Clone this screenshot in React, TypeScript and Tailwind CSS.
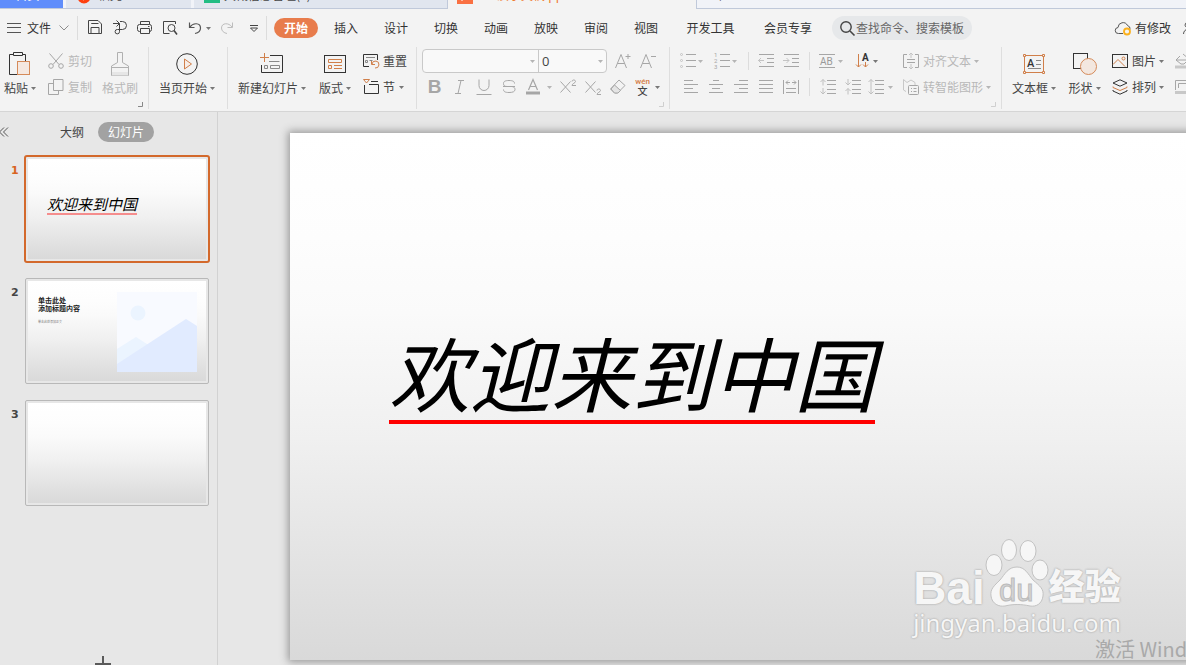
import type { ReactNode } from "react"

type IconProps = { w?: number; h?: number; className?: string; children: ReactNode }

// Base wrapper, every icon is drawn 1:1 in pixels
function Icon({ w = 16, h = 16, className = "text-[#a6a6a6]", children }: IconProps) {
  return (
    <svg
      width={w}
      height={h}
      viewBox={`0 0 ${w} ${h}`}
      fill="none"
      stroke="currentColor"
      className={`block shrink-0 overflow-visible ${className}`}
      aria-hidden="true"
    >
      {children}
    </svg>
  )
}

function Caret({ className = "text-[#777]" }: { className?: string }) {
  return (
    <Icon w={5} h={3} className={className}>
      <path d="M0 0h5L2.5 3z" fill="currentColor" stroke="none" />
    </Icon>
  )
}

function Divider() {
  return <div className="h-[62px] w-px shrink-0 bg-[#dedede]" />
}

function SmallDivider({ className }: { className: string }) {
  return <div className={`h-[18px] w-px shrink-0 bg-[#dcdcdc] ${className}`} />
}

function Corner({ className = "text-[#cfcfcf]" }: { className?: string }) {
  return (
    <button aria-label="更多" className="absolute right-[5px] bottom-1">
      <Icon w={5} h={5} className={className}>
        <path d="M4.5 0v4.5H0" />
      </Icon>
    </button>
  )
}

type BigButtonProps = { icon: ReactNode; label: string; caret?: boolean; className: string }

function BigButton({ icon, label, caret = true, className }: BigButtonProps) {
  return (
    <button className={`flex shrink-0 flex-col items-center pt-1 whitespace-nowrap ${className}`}>
      <span className="flex h-6 items-center">{icon}</span>
      <span className="flex h-6 items-center gap-[3px]">
        {label}
        {caret && <Caret />}
      </span>
    </button>
  )
}

type RowButtonProps = { icon: ReactNode; label: string; caret?: string; className?: string }

function RowButton({ icon, label, caret, className = "" }: RowButtonProps) {
  return (
    <button className={`flex h-[26px] items-center gap-1 whitespace-nowrap ${className}`}>
      {icon}
      <span className="flex items-center gap-[3px]">
        {label}
        {caret && <Caret className={caret} />}
      </span>
    </button>
  )
}

function IconButton({ label, className = "", children }: { label: string; className?: string; children: ReactNode }) {
  return (
    <button aria-label={label} className={`flex h-[26px] shrink-0 items-center justify-center ${className}`}>
      {children}
    </button>
  )
}

const menuTabs = ["插入", "设计", "切换", "动画", "放映", "审阅", "视图"]

const alignIcons = [
  { label: "左对齐", d: "M1 1.5h9M1 5.5h14M1 9.5h9M1 13.5h14" },
  { label: "居中", d: "M5 1.5h6M1 5.5h14M4 9.5h8M1 13.5h14" },
  { label: "右对齐", d: "M6 1.5h9M1 5.5h14M6 9.5h9M1 13.5h14" },
  { label: "两端对齐", d: "M1 1.5h14M1 5.5h14M1 9.5h14M1 13.5h14" },
  { label: "分散对齐", d: "M.5 1v14M15.5 1v14M3 9.5h10M3 13.5h10M3 3.5h4M9 3.5h4M5 1.5l-2 2 2 2M11 1.5l2 2-2 2" },
]

function WindowTabs() {
  return (
    <div className="flex h-[9px] shrink-0 items-stretch overflow-hidden bg-[#f1f3f8] text-[12px] leading-[14px] text-[#444]">
      <div className="flex w-[63px] items-end justify-center border-b border-[#c0c9da] bg-[#5f8dfb] pb-[6px] pr-2 text-white">首页</div>
      <div className="w-[3px] border-b border-[#c0c9da]" />
      <div className="flex w-[125px] items-end gap-[6px] border-b border-[#c0c9da] bg-[#e1e6ef] pb-[6px] pl-3">
        <Icon w={14} h={12} className="text-[#fe4010]">
          <circle cx="6" cy="7" r="6.500" fill="currentColor" stroke="none" />
          <path d="M5 10V5h1a2 2 0 0 1 1 4z" stroke="#fff" />
        </Icon>
        稻壳
      </div>
      <div className="w-[3px] border-b border-[#c0c9da]" />
      <div className="flex w-[254px] items-end gap-1 border-r border-b border-[#c0c9da] bg-[#e1e6ef] pb-[6px] pl-[10px]">
        <Icon w={16} h={14} className="text-[#22bd84]">
          <rect width="16" height="15" fill="currentColor" stroke="none" />
        </Icon>
        大概信息管理(1)
      </div>
      <div className="flex w-[248px] items-end gap-2 bg-[#f3f3f3] pb-[7px] pl-[9px] text-[#f07a32]">
        <Icon w={16} h={14} className="text-[#fa7042]">
          <rect width="16" height="16" fill="currentColor" stroke="none" />
          <path d="M5 5v8" stroke="#fff" />
        </Icon>
        <span className="pl-4">演示文稿.pp</span>
      </div>
      <div className="flex flex-1 items-end border-b border-l border-[#c0c9da] pb-1 pl-[20px]">+</div>
    </div>
  )
}

function MenuBar() {
  return (
    <div className="flex h-[38px] shrink-0 items-center overflow-hidden whitespace-nowrap text-[#333]">
      <button className="flex items-center pl-[7px]">
        <Icon w={14} h={10} className="text-[#555]">
          <path d="M0 .5h14M0 4.5h14M0 9.5h14" />
        </Icon>
        <span className="ml-[6px]">文件</span>
        <Icon w={10} h={6} className="ml-2 text-[#8c8c8c]">
          <path d="M.5.5 5 5 9.500.5" />
        </Icon>
      </button>
      <div className="ml-2 h-6 w-px shrink-0 bg-[#dcdcdc]" />
      <div className="ml-[9px] flex shrink-0 items-center gap-[9px]">
        <IconButton label="保存">
          <Icon className="text-[#444]">
            <path d="M1.500.5H11l3.500 3.500v9.500h-13zM4.500 4V3.500h7M4 13.500v-6h8v6" />
          </Icon>
        </IconButton>
        <IconButton label="输出">
          <Icon className="text-[#444]">
            <path d="M1 3.500h6M4.500.500l3 3-3 3M8 1.500h2.500a3.800 3.800 0 0 1 0 8H5.500a2.200 2.200 0 1 0 2 2.200V3.500" />
          </Icon>
        </IconButton>
        <IconButton label="打印">
          <Icon className="text-[#444]">
            <path d="M3.500 4.500v-3h9v3M3.500 11.500h-1a2 2 0 0 1-2-2v-3a2 2 0 0 1 2-2h10a2 2 0 0 1 2 2v3a2 2 0 0 1-2 2M3.500 8.500h9v5h-9zM11 6.500h1.500" />
          </Icon>
        </IconButton>
        <IconButton label="打印预览">
          <Icon className="text-[#444]">
            <path d="M13.500 4v-2.500h-12v12h6" />
            <circle cx="9.500" cy="8" r="3.500" />
            <path d="M12 10.500l3 4" strokeWidth="1.500" />
          </Icon>
        </IconButton>
      </div>
      <IconButton label="撤销" className="ml-[10px]">
        <Icon w={14} h={14} className="text-[#555]">
          <path d="M1.500 1.500v5h5M2 6c3-4.500 10.500-4.500 10.500 1 0 3-2.500 5-5.500 5.500" strokeWidth="1.200" />
        </Icon>
        <span className="pl-1">
          <Caret />
        </span>
      </IconButton>
      <IconButton label="恢复" className="ml-[9px]">
        <Icon w={14} h={14} className="text-[#bdbdbd]">
          <path d="M12.500 1.500v5h-5M12 6c-3-4.500-10.500-4.500-10.500 1 0 3 2.500 5 5.500 5.500" />
        </Icon>
      </IconButton>
      <IconButton label="自定义" className="ml-[16px]">
        <Icon w={8} h={7} className="text-[#444]">
          <path d="M0 .5h8M.500 3h7L4 6.500z" />
        </Icon>
      </IconButton>
      <div className="ml-[8px] h-6 w-px shrink-0 bg-[#dcdcdc]" />
      <button className="ml-[7px] h-5 w-11 shrink-0 rounded-full bg-[#e87c4c] font-bold leading-5 text-white">开始</button>
      <nav className="ml-[3px] flex shrink-0">
        {menuTabs.map((tab) => (
          <button key={tab} className="w-[50px]">
            {tab}
          </button>
        ))}
        <button className="w-[79px]">开发工具</button>
        <button className="w-[76px]">会员专享</button>
      </nav>
      <label className="ml-[6px] flex h-6 w-[140px] shrink-0 items-center gap-px rounded-full bg-[#e6e8ea] pl-2">
        <Icon w={15} h={15} className="text-[#444]">
          <circle cx="6" cy="6" r="5.200" strokeWidth="1.400" />
          <path d="M10 10l4.500 4.500" strokeWidth="1.600" />
        </Icon>
        <input
          aria-label="查找命令、搜索模板"
          placeholder="查找命令、搜索模板"
          className="w-[112px] bg-transparent text-[12px] outline-none placeholder:text-[#666]"
        />
      </label>
      <button className="ml-auto flex shrink-0 items-center gap-[3px]">
        <Icon w={17} h={15} className="text-[#555]">
          <path d="M8 12.500H3.500a3 3 0 0 1-.500-6 5 5 0 0 1 9.500-2 3.500 3.500 0 0 1 2.500 4" />
          <circle cx="12" cy="10.500" r="3" stroke="#fbb01c" strokeWidth="1.800" />
        </Icon>
        有修改
      </button>
      <IconButton label="协作" className="ml-3 w-[3px] overflow-hidden">
        <Icon w={3} h={14} className="text-[#555]">
          <path d="M6 1a3 3 0 0 0-3 5M.500 13a5 5 0 0 1 5-5" />
        </Icon>
      </IconButton>
    </div>
  )
}

function FontGroup() {
  return (
    <div className="relative flex shrink-0 flex-col pr-[9px] pl-[5px] text-[#a6a6a6]">
      <div className="flex h-[26px] items-center">
        <div className="flex h-6 w-[185px] items-center rounded border border-[#c9c9c9] bg-[#f9f9f9] text-[#444]">
          <input aria-label="字体" className="h-full w-[107px] bg-transparent px-1 outline-none" />
          <Caret className="text-[#b5b5b5]" />
          <div className="ml-[3px] h-full w-px bg-[#c9c9c9]" />
          <input
            aria-label="字号"
            defaultValue="0"
            className="h-full w-[59px] bg-transparent pl-[3px] font-['Open_Sans',sans-serif] text-[13px] outline-none"
          />
          <Caret className="text-[#b5b5b5]" />
        </div>
        <IconButton label="增大字号" className="ml-[3px] w-[25px]">
          <Icon>
            <path d="M.5 15 6 1.500 11.500 15M2.500 10.500h7M10.500 3.500h5M13 1v5" />
          </Icon>
        </IconButton>
        <IconButton label="减小字号" className="w-[25px]">
          <Icon>
            <path d="M.5 15 6 1.500 11.500 15M2.500 10.500h7M11 3.500h5" />
          </Icon>
        </IconButton>
      </div>
      <div className="flex h-[26px] items-center font-['Lato',sans-serif] text-[19px] leading-[26px]">
        <IconButton label="加粗" className="w-[25px] font-['Liberation_Sans',sans-serif] font-bold">B</IconButton>
        <IconButton label="倾斜" className="w-[25px]">
          <Icon w={9}>
            <path d="M3 1.500h6M0 14.500h6M6 1.500l-3 13" />
          </Icon>
        </IconButton>
        <IconButton label="下划线" className="w-[24px]">
          <Icon>
            <path d="M3 .5v6a5 5 0 0 0 10 0v-6M.500 15.500h15" />
          </Icon>
        </IconButton>
        <IconButton label="删除线" className="w-[26px]">
          <Icon w={14}>
            <path d="M12.500 4.500c0-2-1.500-3-5.500-3s-5.500 1-5.500 3 1 3 3.500 3h5c2 .300 3 1.500 3 3 0 2-2 3-6 3s-5.500-1-5.500-3M1 7.500h12" />
          </Icon>
        </IconButton>
        <IconButton label="字体颜色" className="w-[22px]">
          <Icon w={14} h={16}>
            <path d="M2.500 11 7 .5 11.500 11M4 7.500h6" strokeWidth="1.200" />
            <path d="M0 14h14" strokeWidth="3" />
          </Icon>
        </IconButton>
        <IconButton label="选择字体颜色" className="w-[11px]">
          <Caret className="text-[#b5b5b5]" />
        </IconButton>
        <IconButton label="上标" className="w-[25px]">
          <Icon>
            <path d="M.5 2.500l10 11M10.500 2.500l-10 11M12 2.500c0-2 3.500-2 3.500 0 0 1.500-3.500 2-3.500 4h4" />
          </Icon>
        </IconButton>
        <IconButton label="下标" className="w-[25px]">
          <Icon>
            <path d="M.5 2.500l10 11M10.500 2.500l-10 11M12 11.500c0-2 3.500-2 3.500 0 0 1.500-3.500 2-3.500 4h4" />
          </Icon>
        </IconButton>
        <IconButton label="清除格式" className="w-[25px]">
          <Icon>
            <path d="M9 1l6 5.500L7.500 14h-3L.500 10z" />
            <path d="M4.500 6l6 5.500L8 14H4.500L1 10z" fill="#e4e4e4" />
          </Icon>
        </IconButton>
        <IconButton label="拼音指南" className="w-[25px]">
          <span className="flex flex-col items-center">
            <span className="font-['Roboto',sans-serif] text-[8px] leading-[8px] font-medium text-[#d47b45]">wén</span>
            <span className="font-['Noto_Sans_CJK_SC',sans-serif] text-[10px] leading-[10px] font-medium text-[#444]">文</span>
          </span>
        </IconButton>
        <Caret />
      </div>
      <Corner />
    </div>
  )
}

function ParagraphGroup() {
  return (
    <div className="relative flex shrink-0 pr-[10px] pl-[10px] text-[#b8b8b8]">
      <div className="flex w-[213px] flex-col">
        <div className="flex h-[26px] items-center">
          <IconButton label="项目符号" className="gap-[2px]">
            <Icon>
              <path d="M6 1.500h10M6 7.500h10M6 13.500h10" />
              <g stroke="#c4c4c4">
                <circle cx="1.500" cy="1.500" r="1" />
                <circle cx="1.500" cy="7.500" r="1" />
                <circle cx="1.500" cy="13.500" r="1" />
              </g>
            </Icon>
            <Caret className="text-[#b5b5b5]" />
          </IconButton>
          <IconButton label="编号" className="ml-[11px] gap-[2px]">
            <Icon>
              <path d="M6 1.500h10M6 7.500h10M6 13.500h10" />
              <g fill="currentColor" stroke="none" fontSize="6" fontFamily="Roboto, sans-serif">
                <text x="0" y="4">1</text>
                <text x="0" y="10">2</text>
                <text x="0" y="16">3</text>
              </g>
            </Icon>
            <Caret className="text-[#b5b5b5]" />
          </IconButton>
          <SmallDivider className="ml-[11px]" />
          <IconButton label="减少缩进量" className="ml-[9px]">
            <Icon>
              <path d="M1 1.500h15M9 5.500h7M9 9.500h7M1 13.500h15" />
              <path d="M0 7.500h6M3 5L.500 7.500 3 10" stroke="#c4c4c4" />
            </Icon>
          </IconButton>
          <IconButton label="增加缩进量" className="ml-[9px]">
            <Icon>
              <path d="M1 1.500h15M9 5.500h7M9 9.500h7M1 13.500h15" />
              <path d="M0 7.500h6M3.500 5L6 7.500 3.500 10" stroke="#c4c4c4" />
            </Icon>
          </IconButton>
          <SmallDivider className="ml-[10px]" />
          <IconButton label="文字排列" className="ml-[9px] gap-[3px]">
            <Icon>
              <path d="M0 1.500h16M0 14.500h16" />
              <text x="1" y="12" fontSize="10" fontFamily="Roboto, sans-serif" fill="#999" stroke="none">AB</text>
            </Icon>
            <Caret className="text-[#b5b5b5]" />
          </IconButton>
          <IconButton label="文字方向" className="ml-[13px] gap-[3px]">
            <Icon w={14} className="text-[#d07f4a]">
              <path d="M2.500 1v13M0 11.500l2.500 2.500L5 11.500M9.500 9v5M7 11.500l2.500 2.500 2.500-2.500" />
              <text x="6" y="8" fontSize="10" fontWeight="700" fontFamily="Roboto, sans-serif" fill="#333" stroke="none">A</text>
            </Icon>
            <Caret />
          </IconButton>
        </div>
        <div className="flex h-[26px] items-center pl-[3px]">
          <div className="flex gap-[9px]">
            {alignIcons.map((item) => (
              <IconButton key={item.label} label={item.label}>
                <Icon>
                  <path d={item.d} />
                </Icon>
              </IconButton>
            ))}
          </div>
          <SmallDivider className="ml-[10px]" />
          <IconButton label="增加段间距" className="ml-[10px]">
            <Icon>
              <path d="M7 1.500h9M7 5.500h9M7 10.500h9M7 14.500h9" />
              <path d="M3 6.500v-6M.500 3L3 .5 5.500 3M3 9v6M.500 12.500L3 15l2.500-2.500" stroke="#c0c0c0" />
            </Icon>
          </IconButton>
          <IconButton label="减少段间距" className="ml-[9px]">
            <Icon>
              <path d="M7 1.500h9M7 5.500h9M7 10.500h9M7 14.500h9" />
              <path d="M3 0v6M.500 3.500L3 6l2.500-2.500M3 15.500v-6M.500 12L3 9.500 5.500 12" stroke="#c0c0c0" />
            </Icon>
          </IconButton>
          <IconButton label="行距" className="ml-[7px] gap-1">
            <Icon>
              <path d="M7 1.500h9M7 5.500h9M7 10.500h9M7 14.500h9" />
              <path d="M3 .5v14.500M.500 3L3 .5 5.500 3M.500 12.500L3 15l2.500-2.500" stroke="#c0c0c0" />
            </Icon>
            <Caret className="text-[#b5b5b5]" />
          </IconButton>
        </div>
      </div>
      <div className="ml-[10px] flex flex-col">
        <RowButton
          label="对齐文本"
          caret="text-[#b5b5b5]"
          icon={
            <Icon>
              <path d="M4 1.500H.500v13H4M12 1.500h3.500v13H12M4 6.500h8M4 9.500h8" />
              <path d="M8 5V0M6 2l2-2 2 2M8 11v5M6 14l2 2 2-2" stroke="#c4c4c4" />
            </Icon>
          }
        />
        <RowButton
          label="转智能图形"
          caret="text-[#b5b5b5]"
          icon={
            <Icon>
              <path d="M3 12.500L.500 11V.500L4 3.500 8 1l4 2.500V6" stroke="#c8c8c8" />
              <rect x="5.500" y="6.500" width="10" height="9" rx="1" />
              <path d="M8 9.500h1M8 12.500h1M10.500 9.500h3M10.500 12.500h3" />
            </Icon>
          }
        />
      </div>
      <Corner />
    </div>
  )
}

function Ribbon() {
  return (
    <div className="flex h-[65px] shrink-0 overflow-hidden border-b border-[#d5d5d5] text-[#444]">
      <div className="relative flex shrink-0 pt-px pr-[10px]">
        <BigButton
          className="w-10"
          label="粘贴"
          icon={
            <Icon w={22} h={24} className="text-[#333]">
              <path d="M4 2.500H.5v20H8M14 2.500h2.500V9M4.500.5h9v3h-9z" />
              <rect x="8.500" y="9.500" width="12" height="13" fill="#f5e8e0" stroke="#d58a59" />
            </Icon>
          }
        />
        <div className="ml-2 flex flex-col text-[#b8b8b8]">
          <RowButton
            label="剪切"
            icon={
              <Icon>
                <path d="M1.500.5 11 11.500M14.500.5 5 11.500" />
                <circle cx="3" cy="13" r="2.300" />
                <circle cx="13" cy="13" r="2.300" />
              </Icon>
            }
          />
          <RowButton
            label="复制"
            icon={
              <Icon>
                <path d="M5 4.500H.5v11h10V12" />
                <path d="M5.500.5h9.500v11H5.500z" />
              </Icon>
            }
          />
        </div>
        <BigButton
          className="ml-[10px] w-9 text-[#b8b8b8]"
          label="格式刷"
          caret={false}
          icon={
            <Icon w={18} h={24} className="text-[#b0b0b0]">
              <path d="M6.500 10.500V.500h5v10l6 3.500v9.500H.500V14zM1 15.500h16" />
              <path d="M1 20h16v3.500H1z" fill="#e6e6e6" stroke="none" />
            </Icon>
          }
        />
        <Corner className="text-[#888]" />
      </div>
      <Divider />
      <div className="flex shrink-0 pt-px pr-3 pl-[10px]">
        <BigButton
          className="w-14"
          label="当页开始"
          icon={
            <Icon w={22} h={22} className="text-[#333]">
              <circle cx="11" cy="11" r="10.300" />
              <path d="M8.500 6v10l7-5z" stroke="#d07f4a" fill="#f8ede6" />
            </Icon>
          }
        />
      </div>
      <Divider />
      <div className="flex shrink-0 pt-px pr-[9px] pl-[10px]">
        <BigButton
          className="w-[68px]"
          label="新建幻灯片"
          icon={
            <Icon w={24} h={22} className="text-[#333]">
              <path d="M10 2.500h12.500v17h-21V12" />
              <path d="M9 8.500h10.500M4.500 12.500h3v3h-3zM10.500 12.500h9v3h-9z" stroke="#888" />
              <path d="M4.500 0v9M0 4.500h9" stroke="#d07f4a" />
            </Icon>
          }
        />
        <BigButton
          className="ml-[13px] w-8"
          label="版式"
          icon={
            <Icon w={22} h={18} className="text-[#333]">
              <rect x=".5" y=".5" width="21" height="17" />
              <path d="M4.500 4.500h13v3h-13zM4.500 10.500h3v3h-3zM10 10.500h8M10 13.500h8" stroke="#d07f4a" />
            </Icon>
          }
        />
        <div className="ml-3 flex flex-col">
          <RowButton
            label="重置"
            icon={
              <Icon className="text-[#333]">
                <path d="M6 13.500H.5v-12h14V7" />
                <path d="M3 4.500h9M2.500 7.500h2v2h-2zM6.500 7.500h3" stroke="#888" />
                <path d="M8.500 8v3.500H12M9 11a3.500 3.500 0 1 1 3 4" stroke="#d07f4a" />
              </Icon>
            }
          />
          <RowButton
            label="节"
            caret="text-[#777]"
            className="[&>span]:gap-1"
            icon={
              <Icon className="text-[#333]">
                <path d="M8 2.500h7M1.500 6v8.500h14v-9H6" />
                <path d="M.5.500h6L3.500 4z" stroke="#d07f4a" />
              </Icon>
            }
          />
        </div>
      </div>
      <Divider />
      <div className="flex pt-px">
        <FontGroup />
      </div>
      <Divider />
      <div className="flex pt-px">
        <ParagraphGroup />
      </div>
      <Divider />
      <div className="flex shrink-0 pt-px pl-[10px]">
        <BigButton
          className="w-11"
          label="文本框"
          icon={
            <Icon w={22} h={20} className="text-[#d07f4a]">
              <path d="M3 1.500h16M3 18.500h16M1.500 3v14M20.500 3v14" />
              <path d="M.5.5h2v2h-2zM19.500.5h2v2h-2zM.5 17.500h2v2h-2zM19.500 17.500h2v2h-2z" />
              <text x="4" y="13" fontSize="11" fontWeight="500" fontFamily="Roboto, sans-serif" fill="#333" stroke="none">A</text>
              <path d="M13 6.500h5M13 10.500h5M5 14.500h13" stroke="#888" />
            </Icon>
          }
        />
        <BigButton
          className="ml-3 w-[33px]"
          label="形状"
          icon={
            <Icon w={24} h={22} className="text-[#333]">
              <rect x=".5" y=".5" width="14" height="15" />
              <circle cx="15.500" cy="13.500" r="8" fill="#f3e7df" stroke="#d58a59" />
            </Icon>
          }
        />
        <div className="ml-[11px] flex flex-col">
          <RowButton
            label="图片"
            caret="text-[#777]"
            icon={
              <Icon className="text-[#333]">
                <rect x=".5" y="1.500" width="15" height="13" />
                <path d="M1 11.500l5-5 7 7" stroke="#d07f4a" />
                <circle cx="11.500" cy="5.500" r="1.500" stroke="#d07f4a" />
              </Icon>
            }
          />
          <RowButton
            label="排列"
            caret="text-[#777]"
            icon={
              <Icon className="text-[#333]">
                <path d="M8 .8l7 3.200-7 3.200L1 4z" />
                <path d="M1 7.500v1l7 3 7-3v-1" stroke="#d07f4a" />
                <path d="M1 11v1l7 3.200 7-3.200v-1" />
              </Icon>
            }
          />
        </div>
        <div className="ml-[11px] flex flex-col">
          <IconButton label="填充">
            <Icon>
              <path d="M8 1l6 5-5 5H6L1 7l4-4M1 7h12" />
              <path d="M0 14h16" strokeWidth="3" stroke="#c8c8c8" />
            </Icon>
          </IconButton>
          <IconButton label="轮廓">
            <Icon>
              <path d="M.5 11V1.500h15V11M3.500 9V4.500h9V9" />
              <path d="M0 13.500h16" strokeWidth="3" stroke="#c8c8c8" />
            </Icon>
          </IconButton>
        </div>
      </div>
    </div>
  )
}

const slideBg = "bg-[linear-gradient(to_bottom,#fff_0%,#fdfdfd_20%,#fafafa_34%,#f0f0f0_58%,#e6e6e6_76%,#d9d9d9_100%)]"

function ThumbPicture() {
  return (
    <svg viewBox="0 0 80 80" className="h-20 w-20 bg-[#f8faff]" aria-hidden="true">
      <circle cx="21" cy="21" r="7.500" fill="#ebf4ff" />
      <path d="M0 57l19-12 14 9v26H0z" fill="#ebf4ff" />
      <path d="M0 72l69-45 11 7v46H0z" fill="#e1ebff" />
    </svg>
  )
}

function SlidePanel() {
  return (
    <aside className="flex w-[218px] shrink-0 flex-col border-r border-[#d2d2d2]">
      <div className="mb-[3px] flex h-10 shrink-0 items-center">
        <button aria-label="收起" className="w-[9px]">
          <Icon w={9} h={10} className="text-[#555]">
            <path d="M4 .5L-.500 5 4 9.500M8 .5L3.500 5 8 9.500" />
          </Icon>
        </button>
        <button className="ml-[51px] text-[#444]">大纲</button>
        <button className="ml-[14px] h-5 w-14 rounded-full bg-[#a2a2a2] leading-5 text-white">幻灯片</button>
      </div>
      <ol className="flex flex-col gap-[14px] font-['DejaVu_Sans',sans-serif] text-[11px] font-bold text-[#444]">
        <li className="flex">
          <span className="w-6 shrink-0 pt-2 pl-[11px] text-[#d8631f]">1</span>
          <div className="rounded-[3px] border-2 border-[#d3692c] p-[2px]">
            <div className={`h-[100px] w-[178px] pt-9 pl-[19px] ${slideBg}`}>
              <span className="inline-block border-b-2 border-[#f58d8d] pb-px font-['Noto_Sans_CJK_SC',sans-serif] text-[15px] leading-[17px] font-normal text-black italic">
                欢迎来到中国
              </span>
            </div>
          </div>
        </li>
        <li className="flex">
          <span className="w-6 shrink-0 pt-2 pl-[11px]">2</span>
          <div className="m-px rounded-[2px] border border-[#b8b8b8] p-[2px]">
            <div className={`flex h-[100px] w-[178px] justify-between pt-[11px] pr-[9px] pl-[10px] ${slideBg}`}>
              <div className="pt-[4px] font-['Noto_Sans_CJK_SC',sans-serif] text-[7px] leading-2 text-[#222]">
                单击此处
                <br />
                添加标题内容
                <p className="pt-2 text-[3px] leading-[4px] font-normal text-[#777]">单击此处添加正文</p>
              </div>
              <ThumbPicture />
            </div>
          </div>
        </li>
        <li className="flex">
          <span className="w-6 shrink-0 pt-2 pl-[11px]">3</span>
          <div className="m-px rounded-[2px] border border-[#b8b8b8] p-[2px]">
            <div className={`h-[100px] w-[178px] ${slideBg}`} />
          </div>
        </li>
      </ol>
      <button aria-label="新建幻灯片" className="mt-auto ml-[95px] h-[9px] w-4 overflow-hidden">
        <Icon className="text-[#5a5a5a]">
          <path d="M8 0v16M0 8h16" strokeWidth="2" />
        </Icon>
      </button>
    </aside>
  )
}

function Watermark() {
  return (
    <div className="absolute right-[65px] bottom-[30px] flex flex-col items-start whitespace-nowrap text-[#f6f6f6] [text-shadow:0_0_2px_#aaa,0_0_2px_#bbb]">
      <div className="flex items-end">
        <span className="font-['Liberation_Sans',sans-serif] text-[46px] leading-[46px] font-bold">Bai</span>
        <svg
          width="64"
          height="70"
          viewBox="0 0 64 70"
          fill="#f6f6f6"
          stroke="#c2c2c2"
          className="mb-1 shrink-0 [text-shadow:none]"
          aria-hidden="true"
        >
          <ellipse cx="9" cy="28" rx="8" ry="10.500" />
          <ellipse cx="24" cy="13" rx="7.500" ry="10.500" />
          <ellipse cx="43" cy="14" rx="8" ry="10.500" />
          <ellipse cx="55" cy="33" rx="8" ry="10" />
          <path d="M32 30c8 0 11 7 16 13 7 6 11 9 10 16-1 8-7 11-13 10-9-2-17-2-25 0-6 1-13-2-14-10-1-7 3-10 9-16 5-6 8-13 17-13z" />
          <text x="14" y="64" fontSize="31" fontFamily="Liberation Sans, sans-serif" fill="#d4d4d4" stroke="#bbb">du</text>
        </svg>
        <span className="mb-[6px] font-['Noto_Sans_CJK_SC',sans-serif] text-[36px] leading-[42px] font-black">经验</span>
      </div>
      <span className="font-['Noto_Sans',sans-serif] text-[24px] leading-6">jingyan.baidu.com</span>
    </div>
  )
}

export default function App() {
  return (
    <div className="flex h-screen flex-col overflow-hidden bg-[#f3f3f3] font-['Noto_Sans_CJK_SC',sans-serif] text-[12px] leading-4">
      <WindowTabs />
      <MenuBar />
      <Ribbon />
      <div className="flex min-h-0 flex-1 bg-[#e7e7e7]">
        <SlidePanel />
        <main className="relative min-w-0 flex-1 overflow-hidden pt-[21px] pb-[5px] pl-[72px]">
          <div className={`aspect-video h-full pt-[197px] pl-[99px] shadow-[0_0_8px_2px_#999] ${slideBg}`}>
            <h1 className="inline-block border-b-4 border-[#f00] pb-[9px] text-[81px] leading-[81px] whitespace-nowrap text-black italic">
              欢迎来到中国
            </h1>
          </div>
          <Watermark />
          <div className="absolute right-0 bottom-1 w-[91px] overflow-hidden text-[20px] leading-6 whitespace-nowrap text-[#a9a9a9]">
            激活 Windows
          </div>
        </main>
      </div>
    </div>
  )
}
